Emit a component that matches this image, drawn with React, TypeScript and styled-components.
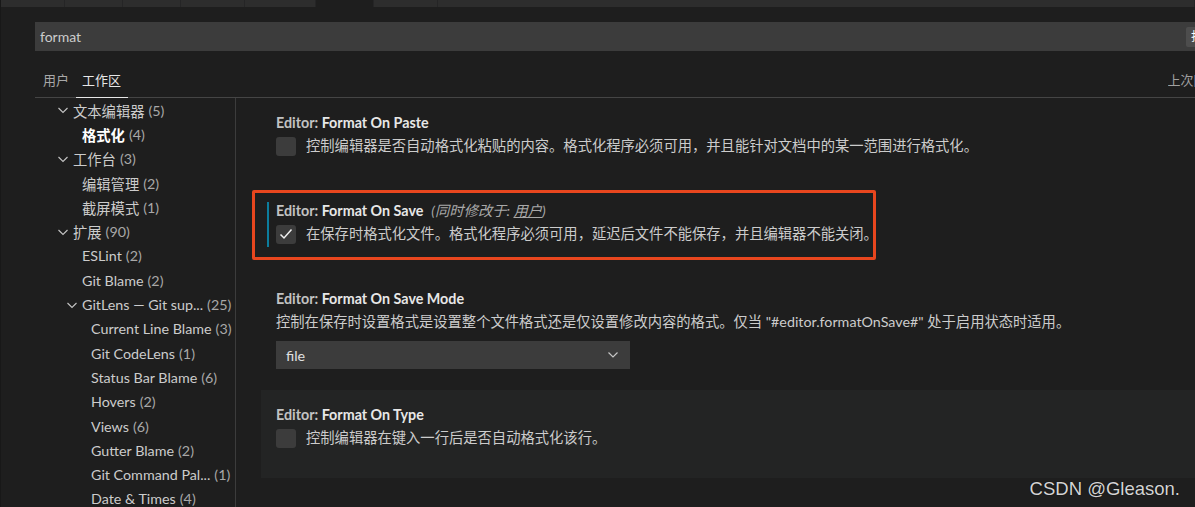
import React from "react";
import styled, { createGlobalStyle } from "styled-components";

const GlobalStyle = createGlobalStyle`
  html, body {
    margin: 0;
    padding: 0;
    background: #1e1e1e;
    overflow: hidden;
  }
  body {
    font-family: Lato, "Noto Sans CJK SC", sans-serif;
  }
`;

const Page = styled.div`
  width: 1195px;
  height: 507px;
  position: relative;
  overflow: hidden;
  background: #1e1e1e;
  color: #cccccc;
  font-size: 14.3px;
  border-left: 1px solid #181818;
  box-sizing: border-box;
`;

const TabStrip = styled.div`
  display: flex;
  height: 7px;
  background: #2d2d2d;
`;

const EditorTab = styled.div<{ $w?: number; $active?: boolean }>`
  width: ${(p) => (p.$w ? `${p.$w}px` : "auto")};
  flex: ${(p) => (p.$w ? "0 0 auto" : "1")};
  box-sizing: border-box;
  border-right: 1px solid #252526;
  background: ${(p) => (p.$active ? "#1e1e1e" : "#2d2d2d")};
`;

const Body = styled.div`
  padding-left: 34px;
`;

const SearchBox = styled.div`
  margin-top: 15px;
  height: 29px;
  width: 1250px;
  background: #3c3c3c;
  display: flex;
  align-items: center;
  padding-left: 5px;
  box-sizing: border-box;
`;

const SearchText = styled.span`
  flex: 0 0 1146px;
  font-size: 14px;
  color: #cccccc;
`;

const CountBadge = styled.span`
  height: 20px;
  line-height: 20px;
  padding: 0 5px;
  border-radius: 2px;
  background: #4d4d4d;
  color: #ffffff;
  font-size: 12.5px;
  white-space: nowrap;
`;

const HeaderRow = styled.div`
  display: flex;
  align-items: flex-end;
  height: 46px;
  width: 1161px;
  padding-left: 1.5px;
  border-bottom: 1px solid #454545;
  box-sizing: content-box;
`;

const ScopeTab = styled.div<{ $active?: boolean }>`
  height: 34px;
  line-height: 34px;
  padding: 0 6.5px;
  margin-bottom: -1px;
  font-size: 13px;
  color: ${(p) => (p.$active ? "#e7e7e7" : "#a8a8a8")};
  border-bottom: 1px solid ${(p) => (p.$active ? "#e7e7e7" : "transparent")};
`;

const SyncText = styled.div`
  margin-left: auto;
  width: 30px;
  height: 34px;
  line-height: 34px;
  overflow: hidden;
  white-space: nowrap;
  font-size: 13px;
  color: #a0a0a0;
`;

const Main = styled.div`
  display: flex;
  height: 420px;
`;

const Sidebar = styled.div`
  flex: 0 0 200px;
  border-right: 1px solid #3c3c3c;
  overflow: hidden;
`;

const TreeRow = styled.div<{ $indent: number }>`
  height: 24.3px;
  display: flex;
  align-items: center;
  padding-left: ${(p) => p.$indent}px;
  white-space: nowrap;
`;

const TreeName = styled.span<{ $bold?: boolean }>`
  color: ${(p) => (p.$bold ? "#ffffff" : "#cccccc")};
  font-weight: ${(p) => (p.$bold ? 700 : 400)};
`;

const TreeCount = styled.span`
  color: #a8a8a8;
  margin-left: 4px;
`;

const ChevronIcon = styled.svg`
  flex: 0 0 16px;
  margin-right: 2px;
`;

const Content = styled.div`
  flex: 1;
  padding-left: 25px;
`;

const SettingItem = styled.div<{ $hover?: boolean; $modified?: boolean; $bottom: number }>`
  position: relative;
  padding: 13px 15px ${(p) => p.$bottom}px;
  background: ${(p) => (p.$hover ? "#232424" : "transparent")};

  ${(p) =>
    p.$modified &&
    `
    &::before {
      content: "";
      position: absolute;
      left: 6px;
      top: 16px;
      width: 2px;
      height: 45px;
      background: #0c7d9d;
    }
    &::after {
      content: "";
      position: absolute;
      left: -9px;
      top: 4px;
      width: 624px;
      height: 70px;
      border: 3px solid #e8461e;
      border-radius: 2px;
      box-sizing: border-box;
      pointer-events: none;
    }
  `}
`;

const Title = styled.div`
  height: 20px;
  line-height: 23px;
  font-weight: 700;
  color: #e7e7e7;
  white-space: nowrap;
`;

const Category = styled.span`
  color: #c2c2c2;
`;

const ModifiedNote = styled.span`
  margin-left: 8px;
  font-weight: 400;
  font-style: italic;
  color: #a8a8a8;

  u {
    text-decoration: underline;
  }
`;

const CheckRow = styled.div`
  margin-top: 5px;
  display: flex;
  align-items: center;
  gap: 10px;
  white-space: nowrap;
`;

const Checkbox = styled.div`
  flex: 0 0 20px;
  height: 19px;
  border-radius: 3px;
  background: #3c3c3c;
  display: flex;
  align-items: center;
  justify-content: center;
`;

const Description = styled.div`
  line-height: 20px;
  color: #cccccc;
  white-space: nowrap;
`;

const DescBlock = styled(Description)`
  margin-top: 5px;
`;

const Select = styled.div`
  margin-top: 9px;
  width: 354px;
  height: 28px;
  background: #3c3c3c;
  display: flex;
  align-items: center;
  justify-content: space-between;
  padding: 0 12px 0 10px;
  box-sizing: border-box;
  color: #e0e0e0;
`;

const Watermark = styled.div`
  position: absolute;
  top: 480px;
  right: 15px;
  font-family: "Liberation Sans", Arial, sans-serif;
  font-size: 18.5px;
  line-height: 18.5px;
  color: #d4d4d4;
  text-shadow: 0 0 1px #000;
`;

const Chevron = () => (
  <ChevronIcon width="16" height="16" viewBox="0 0 16 16">
    <path d="M3.5 6 L8 10.5 L12.5 6" stroke="#c5c5c5" strokeWidth="1.1" fill="none" />
  </ChevronIcon>
);

const tree = [
  { name: "文本编辑器", count: 5, indent: 20, group: true },
  { name: "格式化", count: 4, indent: 47, bold: true },
  { name: "工作台", count: 3, indent: 20, group: true },
  { name: "编辑管理", count: 2, indent: 47 },
  { name: "截屏模式", count: 1, indent: 47 },
  { name: "扩展", count: 90, indent: 20, group: true },
  { name: "ESLint", count: 2, indent: 47 },
  { name: "Git Blame", count: 2, indent: 47 },
  { name: "GitLens — Git sup...", count: 25, indent: 29, group: true },
  { name: "Current Line Blame", count: 3, indent: 56 },
  { name: "Git CodeLens", count: 1, indent: 56 },
  { name: "Status Bar Blame", count: 6, indent: 56 },
  { name: "Hovers", count: 2, indent: 56 },
  { name: "Views", count: 6, indent: 56 },
  { name: "Gutter Blame", count: 2, indent: 56 },
  { name: "Git Command Pal... ", count: 1, indent: 56 },
  { name: "Date & Times", count: 4, indent: 56 },
];

const editorTabs = [64, 58, 58, 64, 71, 58, 64];

export default function App() {
  return (
    <Page>
      <GlobalStyle />
      <TabStrip>
        {editorTabs.map((w, i) => (
          <EditorTab key={i} $w={w} $active={i === 5} />
        ))}
        <EditorTab />
      </TabStrip>
      <Body>
        <SearchBox>
          <SearchText>format</SearchText>
          <CountBadge>找到 4 个设置</CountBadge>
        </SearchBox>
        <HeaderRow>
          <ScopeTab>用户</ScopeTab>
          <ScopeTab $active>工作区</ScopeTab>
          <SyncText>上次同步时间</SyncText>
        </HeaderRow>
        <Main>
          <Sidebar>
            {tree.map((t) => (
              <TreeRow key={t.name} $indent={t.indent}>
                {t.group && <Chevron />}
                <TreeName $bold={t.bold}>{t.name}</TreeName>
                <TreeCount>({t.count})</TreeCount>
              </TreeRow>
            ))}
          </Sidebar>
          <Content>
            <SettingItem $bottom={30}>
              <Title>
                <Category>Editor: </Category>Format On Paste
              </Title>
              <CheckRow>
                <Checkbox />
                <Description>
                  控制编辑器是否自动格式化粘贴的内容。格式化程序必须可用，并且能针对文档中的某一范围进行格式化。
                </Description>
              </CheckRow>
            </SettingItem>
            <SettingItem $bottom={30} $modified>
              <Title>
                <Category>Editor: </Category>Format On Save
                <ModifiedNote>
                  (同时修改于: <u>用户</u>)
                </ModifiedNote>
              </Title>
              <CheckRow>
                <Checkbox>
                  <svg width="16" height="16" viewBox="0 0 16 16">
                    <path d="M2.5 8.5 L6 12 L13.5 3.5" stroke="#f0f0f0" strokeWidth="1.5" fill="none" />
                  </svg>
                </Checkbox>
                <Description>
                  在保存时格式化文件。格式化程序必须可用，延迟后文件不能保存，并且编辑器不能关闭。
                </Description>
              </CheckRow>
            </SettingItem>
            <SettingItem $bottom={21}>
              <Title>
                <Category>Editor: </Category>Format On Save Mode
              </Title>
              <DescBlock>
                控制在保存时设置格式是设置整个文件格式还是仅设置修改内容的格式。仅当 "#editor.formatOnSave#" 处于启用状态时适用。
              </DescBlock>
              <Select>
                <span>file</span>
                <svg width="10" height="6" viewBox="0 0 10 6">
                  <path d="M0.5 0.5 L5 5 L9.5 0.5" stroke="#c5c5c5" strokeWidth="1.2" fill="none" />
                </svg>
              </Select>
            </SettingItem>
            <SettingItem $bottom={30} $hover>
              <Title>
                <Category>Editor: </Category>Format On Type
              </Title>
              <CheckRow>
                <Checkbox />
                <Description>控制编辑器在键入一行后是否自动格式化该行。</Description>
              </CheckRow>
            </SettingItem>
          </Content>
        </Main>
      </Body>
      <Watermark>CSDN @Gleason.</Watermark>
    </Page>
  );
}
